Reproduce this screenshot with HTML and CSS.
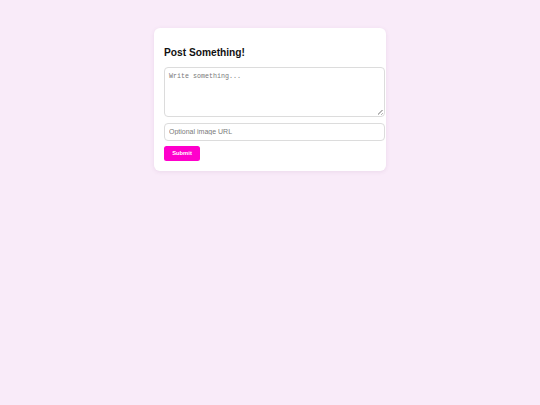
FILE: index.html
```html
<!DOCTYPE html>
<html lang="en">
<head>
<meta charset="utf-8">
<title>Post Something</title>
<link rel="stylesheet" href="styles.css">
</head>
<body>
  <main class="card">
    <h2 class="title">Post Something!</h2>
    <textarea class="post-text" placeholder="Write something..."></textarea>
    <input class="post-url" type="text" placeholder="Optional image URL">
    <button class="submit" type="button">Submit</button>
  </main>
</body>
</html>
```
FILE: styles.css
```css
html, body {
  margin: 0;
  padding: 0;
}
body {
  background: #f9ebf9;
  font-family: "Liberation Sans", Arial, sans-serif;
  padding-top: 28px;
  min-height: 405px;
  box-sizing: border-box;
}
.card {
  display: block;
  width: 212px;
  margin: 0 auto;
  background: #ffffff;
  border-radius: 6px;
  padding: 10px;
  box-shadow: 0 1px 4px rgba(120, 60, 120, 0.10);
}
.title {
  font-size: 10.2px;
  font-weight: bold;
  color: #111111;
  margin: 9.3px 0 8.3px;
}
.post-text {
  display: block;
  width: 100%;
  height: 40px;
  padding: 4px 3px 4px 4px;
  border: 1px solid #dcdcdc;
  border-radius: 4px;
  font-family: "Liberation Mono", "DejaVu Sans Mono", monospace;
  font-size: 6.67px;
  margin: 0 0 6px;
  color: #222;
  background: #fff;
}
.post-text::-webkit-resizer {
  background-color: transparent;
  background-image: linear-gradient(135deg, transparent 40%, #b8b8b8 40%, #b8b8b8 55%, transparent 55%, transparent 72%, #b8b8b8 72%, #b8b8b8 87%, transparent 87%);
  background-size: 5px 5px;
  background-position: right 1px bottom 1px;
  background-repeat: no-repeat;
}
.post-text::placeholder {
  color: #7a7a7a;
}
.post-url {
  display: block;
  width: 100%;
  height: 8px;
  padding: 4px 3px 4px 4px;
  border: 1px solid #dcdcdc;
  border-radius: 4px;
  font-family: "Liberation Sans", Arial, sans-serif;
  font-size: 7px;
  margin: 0 0 5px;
  color: #222;
  background: #fff;
}
.post-url::placeholder {
  color: #7a7a7a;
}
.submit {
  display: block;
  background: #ff00cc;
  color: #ffffff;
  border: none;
  border-radius: 2.5px;
  font-family: "Liberation Sans", Arial, sans-serif;
  font-weight: bold;
  font-size: 5.8px;
  height: 15.5px;
  padding: 0 8px;
  width: 36px;
  cursor: pointer;
}
```
